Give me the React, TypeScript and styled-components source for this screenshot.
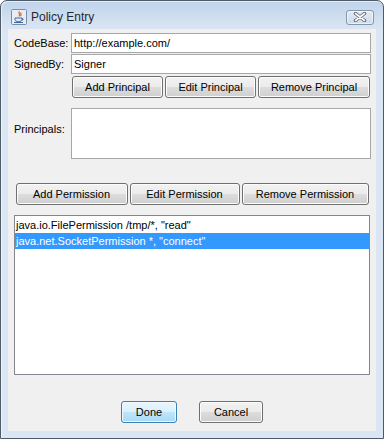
import React from 'react'
import styled, { createGlobalStyle, css } from 'styled-components'

const GlobalStyle = createGlobalStyle`
  html, body {
    margin: 0;
    padding: 0;
    background: #ffffff;
  }
  * {
    box-sizing: border-box;
  }
`

const JavaIcon: React.FC = () => (
  <svg width="16" height="16" viewBox="0 0 16 16">
    <rect x="0.5" y="0.5" width="15" height="15" rx="1" fill="#e8edf3" stroke="#7b8ba0" />
    <path d="M8.5 2.5 C6.5 4.5 10 5 8 7.5 M10 3.5 C9 5 11 5.5 9.5 7" stroke="#e0601a" strokeWidth="1.2" fill="none" />
    <path d="M4 9 H11 V10.5 C11 12 9.5 12.5 7.5 12.5 C5.5 12.5 4 12 4 10.5 Z" fill="none" stroke="#3b66a8" strokeWidth="1" />
    <path d="M11 9.5 C12.8 9.5 12.8 11 11 11" fill="none" stroke="#3b66a8" strokeWidth="1" />
    <path d="M3 13.5 H12" stroke="#3b66a8" strokeWidth="1" />
  </svg>
)

const CloseGlyph: React.FC = () => (
  <svg width="14" height="10" viewBox="0 0 14 10">
    <path d="M2.5 1.5 L11.5 8.5 M11.5 1.5 L2.5 8.5" stroke="#55606e" strokeWidth="3.4" strokeLinecap="round" />
    <path d="M2.5 1.5 L11.5 8.5 M11.5 1.5 L2.5 8.5" stroke="#ffffff" strokeWidth="1.6" strokeLinecap="round" />
  </svg>
)

const Dialog: React.FC = () => (
  <S.Window>
    <S.TitleBar>
      <JavaIcon />
      <S.Title>Policy Entry</S.Title>
      <S.Close>
        <CloseGlyph />
      </S.Close>
    </S.TitleBar>
    <S.Client>
      <S.Form>
        <S.Label>CodeBase:</S.Label>
        <S.Field>http://example.com/</S.Field>
        <S.Label>SignedBy:</S.Label>
        <S.Field>Signer</S.Field>
        <span />
        <S.PrincipalActions>
          <S.Button $w={91}>Add Principal</S.Button>
          <S.Button $w={91}>Edit Principal</S.Button>
          <S.Button $w={112}>Remove Principal</S.Button>
        </S.PrincipalActions>
        <S.Label>Principals:</S.Label>
        <S.PrincipalList />
      </S.Form>

      <S.PermissionActions>
        <S.Button $w={112}>Add Permission</S.Button>
        <S.Button $w={110}>Edit Permission</S.Button>
        <S.Button $w={127}>Remove Permission</S.Button>
      </S.PermissionActions>

      <S.PermissionList>
        <S.Row>java.io.FilePermission /tmp/*, "read"</S.Row>
        <S.Row $selected>java.net.SocketPermission *, "connect"</S.Row>
      </S.PermissionList>

      <S.Footer>
        <S.Button $w={56} $default>Done</S.Button>
        <S.Button $w={64}>Cancel</S.Button>
      </S.Footer>
    </S.Client>
  </S.Window>
)

export default function App() {
  return (
    <>
      <GlobalStyle />
      <Dialog />
    </>
  )
}

const uiFont = `font-family: 'Liberation Sans', Arial, sans-serif; font-size: 11px; color: #000;`

const S = {
  Window: styled.div`
    width: 384px;
    height: 439px;
    display: flex;
    flex-direction: column;
    border: 1px solid #4f5a67;
    border-radius: 7px 7px 0 0;
    background: linear-gradient(#bfd3eb 0px, #d3e1f1 20px, #dae6f4 30px, #dae6f4 100%);
    box-shadow: inset 1px 1px 0 rgba(255, 255, 255, 0.6);
    overflow: hidden;
  `,

  TitleBar: styled.div`
    height: 28px;
    flex: none;
    display: flex;
    align-items: center;
    padding: 4px 9px 0 10px;
  `,

  Title: styled.div`
    flex: 1;
    margin-left: 4px;
    font-family: 'Liberation Sans', Arial, sans-serif;
    font-size: 12px;
    color: #1e2833;
  `,

  Close: styled.div`
    width: 28px;
    height: 15px;
    display: flex;
    align-items: center;
    justify-content: center;
    border: 1px solid #8696ab;
    border-radius: 3px;
    background: linear-gradient(#e3ebf5, #cfdbea);
    box-shadow: inset 0 0 0 1px rgba(255, 255, 255, 0.55);
  `,

  Client: styled.div`
    flex: 1;
    margin: 0 7px 7px 7px;
    display: flex;
    flex-direction: column;
    background: #f0f0f0;
    ${uiFont}
  `,

  Form: styled.div`
    display: grid;
    grid-template-columns: 57px 1fr;
    row-gap: 1px;
    padding: 4px 6px 0 6px;
    align-items: center;
  `,

  Label: styled.div`
    padding-bottom: 1px;
    white-space: nowrap;
  `,

  Field: styled.div`
    height: 20px;
    display: flex;
    align-items: center;
    padding: 0 2px;
    background: #ffffff;
    border: 1px solid #a7a7a7;
  `,

  PrincipalActions: styled.div`
    display: flex;
    gap: 2px;
    padding: 1px 1px 0 1px;
  `,

  PrincipalList: styled.div`
    height: 51px;
    margin-top: 9px;
    background: #ffffff;
    border: 1px solid #a7a7a7;
  `,

  PermissionActions: styled.div`
    display: flex;
    justify-content: center;
    gap: 2px;
    margin-top: 24px;
  `,

  PermissionList: styled.div`
    flex: 1;
    margin: 10px 6px 0 6px;
    padding: 1px 0 0 0;
    background: #ffffff;
    border: 1px solid #828790;
  `,

  Row: styled.div<{ $selected?: boolean }>`
    height: 16px;
    line-height: 16px;
    padding-left: 1px;
    white-space: nowrap;
    ${p =>
      p.$selected &&
      css`
        background: #3399ff;
        color: #ffffff;
      `}
  `,

  Footer: styled.div`
    display: flex;
    justify-content: center;
    gap: 22px;
    padding: 26px 0 8px 0;
  `,

  Button: styled.div<{ $w: number; $default?: boolean }>`
    width: ${p => p.$w}px;
    height: 22px;
    display: flex;
    align-items: center;
    justify-content: center;
    border: 1px solid #707070;
    border-radius: 3px;
    white-space: nowrap;
    background: linear-gradient(#f2f2f2 0%, #ebebeb 50%, #dddddd 50%, #cfcfcf 100%);
    box-shadow: inset 0 0 0 1px #fcfcfc;
    ${p =>
      p.$default &&
      css`
        border-color: #3c7fb1;
        background: linear-gradient(#eaf6fd 0%, #d9f0fc 50%, #bee6fd 50%, #a7d9f5 100%);
        box-shadow: inset 0 0 0 1px #f0f9fe;
      `}
  `,
}
